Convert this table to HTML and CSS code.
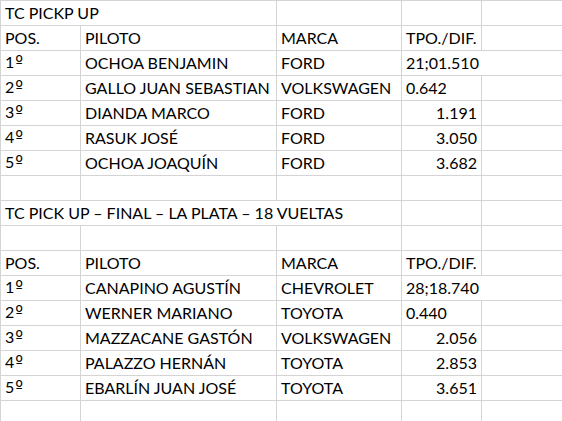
FILE: index.html
```html
<!DOCTYPE html>
<html>
<head>
<meta charset="utf-8">
<link rel="stylesheet" href="styles.css">
</head>
<body>
<table class="sheet">
  <colgroup>
    <col class="c-a"><col class="c-b"><col class="c-c"><col class="c-d"><col class="c-e">
  </colgroup>
  <tr><td colspan="2">TC PICKP UP</td><td></td><td></td><td></td></tr>
  <tr><td>POS.</td><td>PILOTO</td><td>MARCA</td><td>TPO./DIF.</td><td></td></tr>
  <tr><td>1<span class="ord">º</span></td><td>OCHOA BENJAMIN</td><td>FORD</td><td colspan="2">21;01.510</td></tr>
  <tr><td>2<span class="ord">º</span></td><td>GALLO JUAN SEBASTIAN</td><td>VOLKSWAGEN</td><td>0.642</td><td></td></tr>
  <tr><td>3<span class="ord">º</span></td><td>DIANDA MARCO</td><td>FORD</td><td class="num">1.191</td><td></td></tr>
  <tr><td>4<span class="ord">º</span></td><td>RASUK JOSÉ</td><td>FORD</td><td class="num">3.050</td><td></td></tr>
  <tr><td>5<span class="ord">º</span></td><td>OCHOA JOAQUÍN</td><td>FORD</td><td class="num">3.682</td><td></td></tr>
  <tr><td></td><td></td><td></td><td></td><td></td></tr>
  <tr><td colspan="3">TC PICK UP – FINAL – LA PLATA – 18 VUELTAS</td><td></td><td></td></tr>
  <tr><td></td><td></td><td></td><td></td><td></td></tr>
  <tr><td>POS.</td><td>PILOTO</td><td>MARCA</td><td>TPO./DIF.</td><td></td></tr>
  <tr><td>1<span class="ord">º</span></td><td>CANAPINO AGUSTÍN</td><td>CHEVROLET</td><td colspan="2">28;18.740</td></tr>
  <tr><td>2<span class="ord">º</span></td><td>WERNER MARIANO</td><td>TOYOTA</td><td>0.440</td><td></td></tr>
  <tr><td>3<span class="ord">º</span></td><td>MAZZACANE GASTÓN</td><td>VOLKSWAGEN</td><td class="num">2.056</td><td></td></tr>
  <tr><td>4<span class="ord">º</span></td><td>PALAZZO HERNÁN</td><td>TOYOTA</td><td class="num">2.853</td><td></td></tr>
  <tr><td>5<span class="ord">º</span></td><td>EBARLÍN JUAN JOSÉ</td><td>TOYOTA</td><td class="num">3.651</td><td></td></tr>
  <tr><td></td><td></td><td></td><td></td><td></td></tr>
</table>
</body>
</html>
```
FILE: styles.css
```css
html, body {
  margin: 0;
  padding: 0;
  background: #ffffff;
}
body {
  font-family: Lato, "Open Sans", sans-serif;
  font-size: 16px;
  color: #000000;
  overflow: hidden;
}
.sheet {
  border-collapse: collapse;
  table-layout: fixed;
  width: 562px;
}
.c-a { width: 80px; }
.c-b { width: 196px; }
.c-c { width: 125px; }
.c-d { width: 80px; }
.c-e { width: 81px; }
.sheet td {
  border: 1px solid #d4d4d4;
  height: 22px;
  padding: 0 4px 2px 4px;
  line-height: 20px;
  vertical-align: bottom;
  white-space: nowrap;
  overflow: visible;
  text-align: left;
}
.sheet td.num {
  text-align: right;
}
.ord {
  font-family: "DejaVu Sans", sans-serif;
  font-size: 16.5px;
  margin-left: 1px;
}
```
